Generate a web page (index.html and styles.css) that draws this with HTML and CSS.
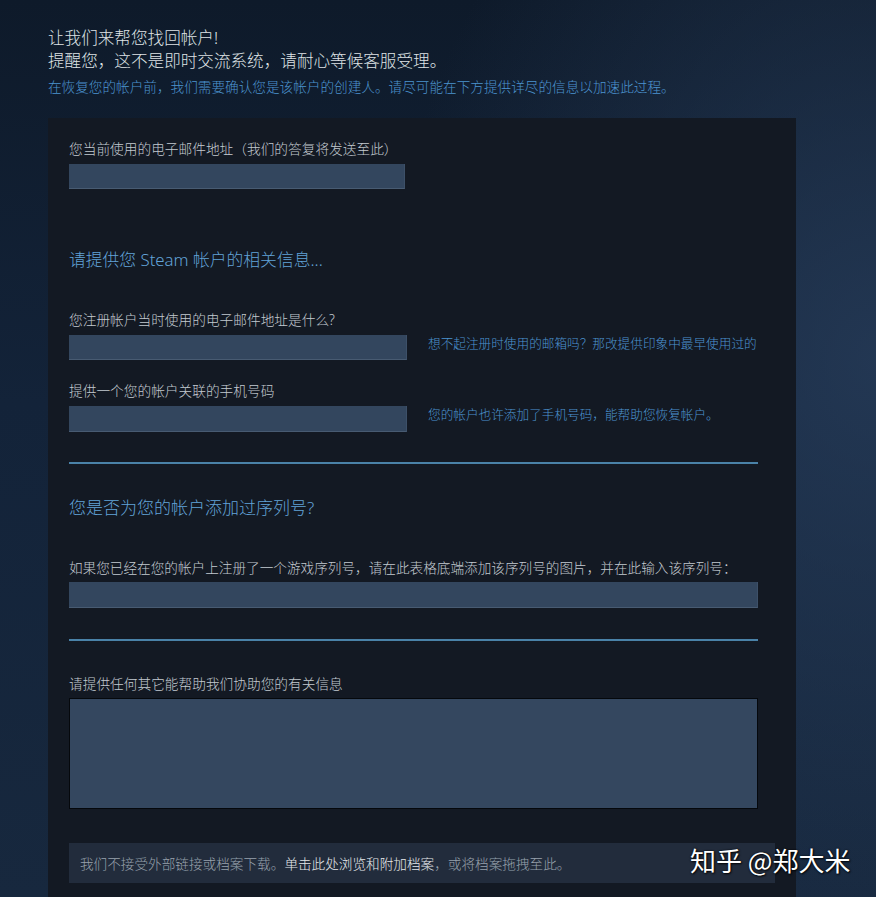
FILE: index.html
```html
<!DOCTYPE html>
<html lang="zh-CN">
<head>
<meta charset="utf-8">
<title>找回帐户</title>
<link rel="stylesheet" href="styles.css">
</head>
<body>
<div class="page">
  <div class="intro">
    <div class="intro-title">让我们来帮您找回帐户!</div>
    <div class="intro-title">提醒您，这不是即时交流系统，请耐心等候客服受理。</div>
    <div class="intro-note">在恢复您的帐户前，我们需要确认您是该帐户的创建人。请尽可能在下方提供详尽的信息以加速此过程。</div>
  </div>

  <div class="panel">
    <div class="label">您当前使用的电子邮件地址（我们的答复将发送至此）</div>
    <div class="input input-short"></div>

    <div class="heading h-first">请提供您 Steam 帐户的相关信息...</div>

    <div class="label l-after-heading">您注册帐户当时使用的电子邮件地址是什么?</div>
    <div class="row">
      <div class="input input-mid"></div>
      <div class="hint">想不起注册时使用的邮箱吗？那改提供印象中最早使用过的</div>
    </div>

    <div class="label l-second">提供一个您的帐户关联的手机号码</div>
    <div class="row">
      <div class="input input-mid input-tall"></div>
      <div class="hint">您的帐户也许添加了手机号码，能帮助您恢复帐户。</div>
    </div>

    <div class="divider d-first"></div>

    <div class="heading heading-b h-second">您是否为您的帐户添加过序列号?</div>

    <div class="label label-wide l-after-heading">如果您已经在您的帐户上注册了一个游戏序列号，请在此表格底端添加该序列号的图片，并在此输入该序列号：</div>
    <div class="input input-full input-tall"></div>

    <div class="divider d-second"></div>

    <div class="label l-after-divider">请提供任何其它能帮助我们协助您的有关信息</div>
    <div class="textarea"></div>

    <div class="upload">
      <span class="upload-muted">我们不接受外部链接或档案下载。</span><span class="upload-link">单击此处浏览和附加档案</span><span class="upload-muted">，或将档案拖拽至此。</span>
    </div>
  </div>

  <div class="watermark">知乎 @郑大米</div>
</div>
</body>
</html>
```

FILE: styles.css
```css
html, body {
  margin: 0;
  padding: 0;
  height: 100%;
}

body {
  background-color: #15233a;
  background-image:
    radial-gradient(ellipse 700px 900px at 100% 40%, rgba(40, 62, 92, 0.75), rgba(40, 62, 92, 0) 70%),
    linear-gradient(180deg, #0e1a2a 0%, #132339 45%, #17283e 100%);
  font-family: "Noto Sans", "Noto Sans CJK SC", sans-serif;
  font-weight: 300;
  overflow: hidden;
}

.page {
  position: relative;
  padding: 26px 0 0 48px;
  min-height: 100%;
  box-sizing: border-box;
}

.intro-title {
  font-size: 16.6px;
  line-height: 23px;
  color: #dfe3e6;
  white-space: nowrap;
}

.intro-note {
  margin-top: 5px;
  font-size: 13.64px;
  line-height: 20px;
  color: #4c94d0;
  white-space: nowrap;
}

.panel {
  margin-top: 21px;
  width: 748px;
  box-sizing: border-box;
  padding: 22px 38px 40px 21px;
  background: #131923;
  min-height: 800px;
}

.label {
  font-size: 13.7px;
  line-height: 18px;
  color: #c3cad1;
  white-space: nowrap;
  margin-bottom: 6px;
}

.label-wide {
  font-size: 13.63px;
  margin-bottom: 5px;
}

.l-after-heading { margin-top: 40px; }
.l-second { margin-top: 22px; }
.l-after-divider { margin-top: 34px; margin-bottom: 5px; }

.heading {
  font-size: 16.8px;
  line-height: 22px;
  color: #62a3d8;
  white-space: nowrap;
}

.heading-b { font-size: 17px; }

.h-first { margin-top: 60px; }
.h-second { margin-top: 33px; }

.input {
  height: 25px;
  box-sizing: border-box;
  background: #33465e;
  border-bottom: 1px solid #485b72;
  border-right: 1px solid #3d5068;
}

.input-tall { height: 26px; }
.input-short { width: 336px; }
.input-mid { width: 338px; flex: none; }
.input-full { width: 689px; }

.row {
  display: flex;
  align-items: flex-start;
  gap: 21px;
}

.hint {
  font-size: 12.65px;
  line-height: 16px;
  color: #4c94d0;
  white-space: nowrap;
}

.divider {
  height: 2px;
  width: 689px;
  background: #4a82a8;
}

.d-first { margin-top: 30px; }
.d-second { margin-top: 31px; }

.textarea {
  width: 689px;
  height: 111px;
  box-sizing: border-box;
  background: #34475f;
  border: 1px solid #05080c;
}

.upload {
  margin-top: 34px;
  width: 706px;
  height: 40px;
  box-sizing: border-box;
  padding-left: 11px;
  display: flex;
  align-items: center;
  background: #222c3c;
  font-size: 13.64px;
  white-space: nowrap;
}

.upload-muted { color: #98a2ad; }
.upload-link { color: #e6e9ec; }

.watermark {
  position: absolute;
  left: 690px;
  top: 842px;
  font-family: "Noto Sans CJK SC", sans-serif;
  font-weight: 400;
  font-size: 26px;
  line-height: 36px;
  color: #ffffff;
  text-shadow: 0 0 2px rgba(0, 0, 0, 0.9), 1px 1px 2px rgba(0, 0, 0, 0.8);
  white-space: nowrap;
}
```
